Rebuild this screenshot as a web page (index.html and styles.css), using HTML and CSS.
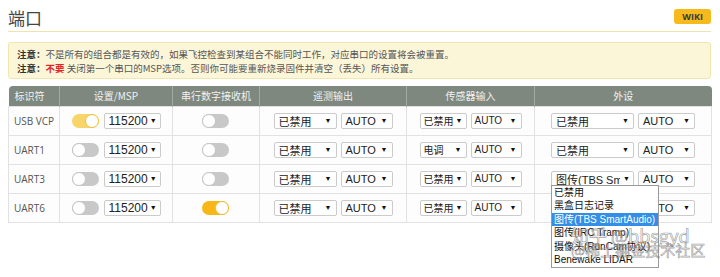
FILE: index.html
```html
<html>
<head>
    <title>端口</title>
    <meta charset="UTF-8">
    <link rel="stylesheet" href="styles.css">
</head>
<body>

<div class="tab-head">
    <span class="tab-title">端口</span>
    <a class="wiki">WIKI</a>
</div>

<div class="note">
    <b>注意：</b>不是所有的组合都是有效的，如果飞控检查到某组合不能同时工作，对应串口的设置将会被重置。<br>
    <b>注意：</b><b class="red">不要</b> 关闭第一个串口的MSP选项。否则你可能要重新烧录固件并清空（丢失）所有设置。
</div>

<table class="ports">
    <colgroup>
        <col style="width:51px"><col style="width:113px"><col style="width:87px">
        <col style="width:147px"><col style="width:128px"><col style="width:177px">
    </colgroup>
    <tr>
        <th class="left">标识符</th>
        <th>设置/MSP</th>
        <th>串行数字接收机</th>
        <th>遥测输出</th>
        <th>传感器输入</th>
        <th>外设</th>
    </tr>
    <tr>
        <td class="name">USB VCP</td>
        <td><div class="cell"><span class="toggle on dim"></span><span class="sel baud w57">115200<i>▼</i></span></div></td>
        <td><div class="cell"><span class="toggle"></span></div></td>
        <td><div class="cell"><span class="sel w63">已禁用<i>▼</i></span><span class="sel w52">AUTO<i>▼</i></span></div></td>
        <td><div class="cell small"><span class="sel w47">已禁用<i>▼</i></span><span class="sel w51">AUTO<i>▼</i></span></div></td>
        <td><div class="cell"><span class="sel w83">已禁用<i>▼</i></span><span class="sel w57">AUTO<i>▼</i></span></div></td>
    </tr>
    <tr>
        <td class="name">UART1</td>
        <td><div class="cell"><span class="toggle"></span><span class="sel baud w57">115200<i>▼</i></span></div></td>
        <td><div class="cell"><span class="toggle"></span></div></td>
        <td><div class="cell"><span class="sel w63">已禁用<i>▼</i></span><span class="sel w52">AUTO<i>▼</i></span></div></td>
        <td><div class="cell small"><span class="sel w47">电调<i>▼</i></span><span class="sel w51">AUTO<i>▼</i></span></div></td>
        <td><div class="cell"><span class="sel w83">已禁用<i>▼</i></span><span class="sel w57">AUTO<i>▼</i></span></div></td>
    </tr>
    <tr>
        <td class="name">UART3</td>
        <td><div class="cell"><span class="toggle"></span><span class="sel baud w57">115200<i>▼</i></span></div></td>
        <td><div class="cell"><span class="toggle"></span></div></td>
        <td><div class="cell"><span class="sel w63">已禁用<i>▼</i></span><span class="sel w52">AUTO<i>▼</i></span></div></td>
        <td><div class="cell small"><span class="sel w47">已禁用<i>▼</i></span><span class="sel w51">AUTO<i>▼</i></span></div></td>
        <td><div class="cell">
            <span class="drop">
                <span class="sel w83 clip">图传(TBS SmartAudio)<i>▼</i></span>
                <ul class="list">
                    <li>已禁用</li>
                    <li>黑盒日志记录</li>
                    <li class="cur">图传(TBS SmartAudio)</li>
                    <li>图传(IRC Tramp)</li>
                    <li>摄像头(RunCam协议)</li>
                    <li>Benewake LIDAR</li>
                </ul>
            </span>
            <span class="sel w57">AUTO<i>▼</i></span>
        </div></td>
    </tr>
    <tr>
        <td class="name">UART6</td>
        <td><div class="cell"><span class="toggle"></span><span class="sel baud w57">115200<i>▼</i></span></div></td>
        <td><div class="cell"><span class="toggle on"></span></div></td>
        <td><div class="cell"><span class="sel w63">已禁用<i>▼</i></span><span class="sel w52">AUTO<i>▼</i></span></div></td>
        <td><div class="cell small"><span class="sel w47">已禁用<i>▼</i></span><span class="sel w51">AUTO<i>▼</i></span></div></td>
        <td><div class="cell"><span class="sel w83">已禁用<i>▼</i></span><span class="sel w57">AUTO<i>▼</i></span></div></td>
    </tr>
</table>

<div class="mark">
    <span class="m1">知乎 @bbsgyd</span>
    <span class="m2">@稀土掘金技术社区</span>
</div>

</body>
</html>
```

FILE: styles.css
```css
body {
    margin: 0;
    padding: 8px 9px 0 8px;
    background: #fff;
    font-family: "Open Sans", "Noto Sans CJK SC", sans-serif;
    color: #333;
    position: relative;
}
.tab-head {
    display: flex;
    align-items: center;
    justify-content: space-between;
    height: 23px;
    border-bottom: 1px solid #efe3ad;
}
.tab-title {
    font-size: 17px;
    color: #444;
    font-family: "Noto Sans CJK SC", sans-serif;
    line-height: 17px;
    margin-top: -4px;
}
.wiki {
    background: #f6ba1c;
    color: #3a3a3a;
    font-weight: bold;
    font-size: 9px;
    line-height: 15px;
    padding: 0 8px;
    border-radius: 3px;
    margin-top: -6px;
    font-family: "Open Sans", sans-serif;
}
.note {
    margin-top: 10px;
    background: #fcf6d9;
    border: 1px solid #f1e6ad;
    border-radius: 3px;
    padding: 4px 8px 3px;
    font-size: 9.5px;
    line-height: 14px;
    color: #555;
    font-family: "Noto Sans CJK SC", sans-serif;
}
.note b {
    color: #333;
}
.note .red {
    color: #e0262a;
}
.ports {
    margin-top: 7px;
    border-collapse: collapse;
    table-layout: fixed;
    width: 703px;
}
.ports th {
    background: #7e887e;
    color: #f2f2f2;
    font-weight: normal;
    font-size: 10px;
    font-family: "Noto Sans CJK SC", sans-serif;
    height: 20px;
    padding: 0;
    border-left: 1px solid #a3aaa3;
}
.ports th:first-child {
    border-left: none;
    border-top-left-radius: 4px;
}
.ports th:last-child {
    border-top-right-radius: 4px;
}
.ports th.left {
    text-align: left;
    padding-left: 6px;
}
.ports td {
    height: 29px;
    padding: 0;
    border: 1px solid #e2e2e2;
    background: #fdfdfd;
}
.ports td.name {
    font-size: 10px;
    color: #555;
    padding-left: 5px;
}
.cell {
    display: flex;
    justify-content: center;
    align-items: center;
    gap: 4px;
}
.toggle {
    width: 27px;
    height: 14px;
    border-radius: 7px;
    background: #c8c8c8;
    position: relative;
    margin-right: 1px;
}
.toggle:after {
    content: "";
    position: absolute;
    left: 0;
    top: 0;
    width: 12px;
    height: 12px;
    border-radius: 50%;
    background: #fff;
    border: 1px solid #c4c4c4;
}
.toggle.on {
    background: #f8b717;
}
.toggle.on.dim {
    background: #f8d46a;
}
.toggle.on:after {
    left: auto;
    right: 0;
    border-color: #f0c040;
}
.sel {
    display: flex;
    align-items: center;
    justify-content: space-between;
    box-sizing: border-box;
    height: 16px;
    border: 1px solid #cbcbcb;
    border-radius: 2px;
    background: #fff;
    padding: 0 4px;
    font-family: "Liberation Sans", "Noto Sans CJK SC", sans-serif;
    font-size: 11px;
    color: #222;
    white-space: nowrap;
    overflow: hidden;
}
.sel.baud {
    font-size: 12px;
}
.small .sel {
    font-size: 10px;
    padding-left: 3px;
}
.sel i {
    font-style: normal;
    font-size: 7px;
    color: #111;
    margin-left: 2px;
}
.w47 { width: 47px; }
.w51 { width: 51px; }
.w52 { width: 52px; }
.w57 { width: 57px; }
.w63 { width: 63px; }
.w83 { width: 83px; }
.clip {
    position: relative;
}
.clip i {
    position: absolute;
    right: 0;
    top: 0;
    bottom: 0;
    width: 13px;
    background: #fff;
    line-height: 14px;
    text-align: center;
    margin: 0;
}
.drop {
    position: relative;
}
.list {
    position: absolute;
    left: 0;
    top: 14px;
    margin: 0;
    padding: 0;
    list-style: none;
    width: 106px;
    background: #fff;
    border: 1px solid #9a9a9a;
    z-index: 2;
    font-family: "Liberation Sans", "Noto Sans CJK SC", sans-serif;
    font-size: 10px;
    color: #111;
}
.list li {
    height: 13.5px;
    line-height: 13.5px;
    padding-left: 2px;
    white-space: nowrap;
    overflow: hidden;
}
.list li.cur {
    background: #338ee8;
    color: #fff;
}
.mark {
    position: absolute;
    left: 571px;
    top: 226px;
    z-index: 3;
    color: rgba(255, 255, 255, 0.4);
    -webkit-text-stroke: 0.7px rgba(100, 100, 100, 0.6);
    font-family: "Noto Sans CJK SC", sans-serif;
}
.mark span {
    display: block;
    white-space: nowrap;
}
.m1 {
    font-size: 18px;
    line-height: 18px;
}
.m2 {
    font-size: 15px;
    line-height: 15px;
    margin-top: -2px;
}
```
